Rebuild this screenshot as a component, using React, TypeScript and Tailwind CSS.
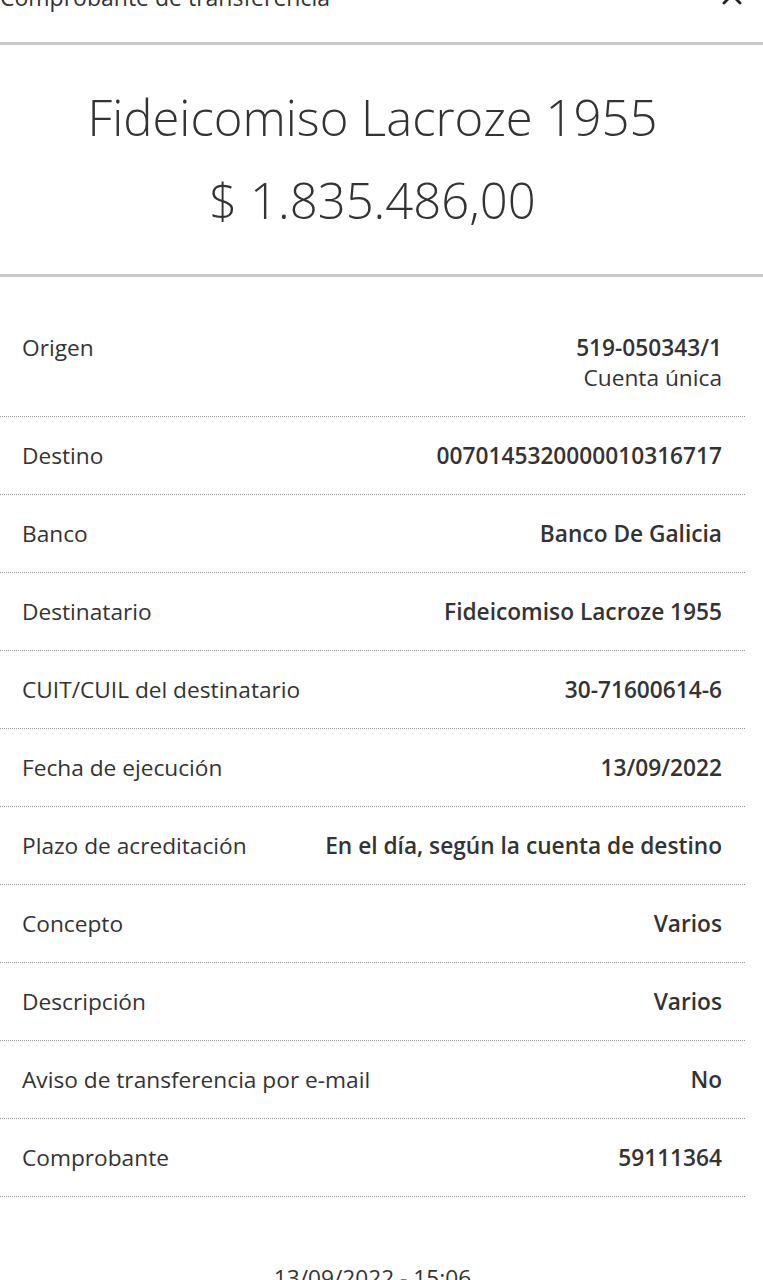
import React from "react";

const rows: { label: string; value: string; sub?: string }[] = [
  { label: "Origen", value: "519-050343/1", sub: "Cuenta única" },
  { label: "Destino", value: "0070145320000010316717" },
  { label: "Banco", value: "Banco De Galicia" },
  { label: "Destinatario", value: "Fideicomiso Lacroze 1955" },
  { label: "CUIT/CUIL del destinatario", value: "30-71600614-6" },
  { label: "Fecha de ejecución", value: "13/09/2022" },
  { label: "Plazo de acreditación", value: "En el día, según la cuenta de destino" },
  { label: "Concepto", value: "Varios" },
  { label: "Descripción", value: "Varios" },
  { label: "Aviso de transferencia por e-mail", value: "No" },
  { label: "Comprobante", value: "59111364" },
];

export default function App() {
  return (
    <div
      className="w-[763px] h-[1280px] overflow-hidden bg-white text-[#333333]"
      style={{ fontFamily: '"Open Sans", "Noto Sans", sans-serif' }}
    >
      <div className="flex items-end justify-between h-[42px] -mt-[32px] pr-[20px]">
        <span className="text-[23px] leading-[30px] -mb-[2px]">Comprobante de transferencia</span>
        <svg width="22" height="22" viewBox="0 0 22 22" className="mb-[4px]">
          <path d="M3 3 L19 19 M19 3 L3 19" stroke="#222" strokeWidth="2.8" strokeLinecap="round" />
        </svg>
      </div>
      <div className="h-[3px] bg-[#c8c8c8] mt-[32px]" />
      <div className="w-[745px] flex flex-col items-center pt-[37px] pb-[39px]">
        <div className="text-[49px] leading-[70px] font-light">Fideicomiso Lacroze 1955</div>
        <div className="text-[49px] leading-[70px] font-light mt-[13px]">$ 1.835.486,00</div>
      </div>
      <div className="h-[3px] bg-[#c8c8c8]" />
      <div className="w-[745px] pt-[32px]">
        {rows.map((r) => (
          <div
            key={r.label}
            className="flex justify-between items-start pl-[22px] pr-[23px] py-[23.5px] border-b border-dotted border-[#999]"
          >
            <span className="text-[22.7px] leading-[30px]">{r.label}</span>
            <div className="flex flex-col items-end">
              <span className="text-[22.7px] leading-[30px] font-semibold">{r.value}</span>
              {r.sub && <span className="text-[22.7px] leading-[30px]">{r.sub}</span>}
            </div>
          </div>
        ))}
      </div>
      <div className="w-[745px] text-center text-[22.7px] leading-[30px] pt-[66px]">13/09/2022 - 15:06</div>
    </div>
  );
}
